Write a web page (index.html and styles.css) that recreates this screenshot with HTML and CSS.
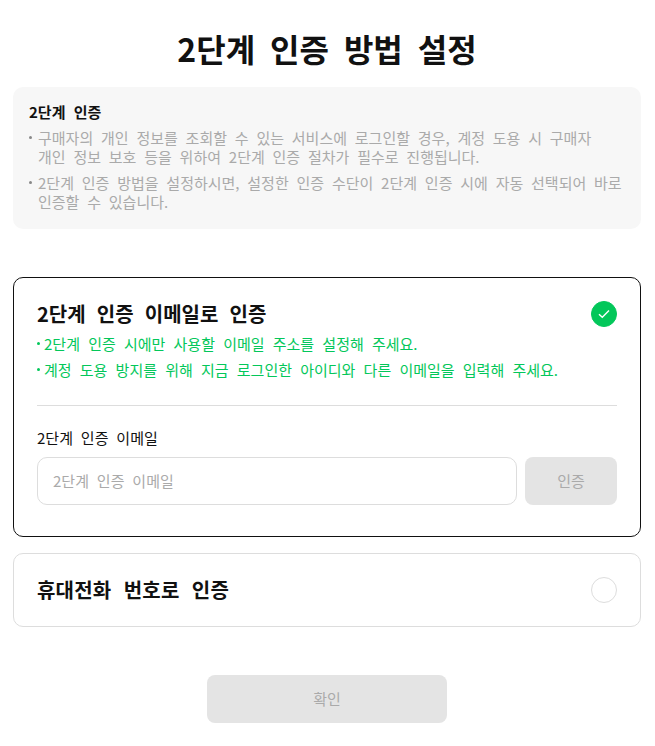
FILE: index.html
```html
<!DOCTYPE html>
<html lang="ko">

<head>
    <meta charset="UTF-8">
    <meta name="viewport" content="width=device-width, initial-scale=1.0">
    <title>2단계 인증 방법 설정</title>
    <link rel="stylesheet" href="styles.css">
</head>

<body>
    <main>
        <h1>2단계 인증 방법 설정</h1>
        <section class="info">
            <h2>2단계 인증</h2>
            <ul class="info-list">
                <li>구매자의 개인 정보를 조회할 수 있는 서비스에 로그인할 경우, 계정 도용 시 구매자<br>개인 정보 보호 등을 위하여 2단계 인증 절차가 필수로 진행됩니다.</li>
                <li>2단계 인증 방법을 설정하시면, 설정한 인증 수단이 2단계 인증 시에 자동 선택되어 바로 인증할 수 있습니다.</li>
            </ul>
        </section>
        <section class="card active">
            <div class="card-head">
                <h3>2단계 인증 이메일로 인증</h3>
                <span class="radio checked">
                    <svg width="12" height="12" viewBox="0 0 12 12" fill="none">
                        <path d="M1 6.2 4.3 9.3 11 2.6" stroke="#fff" stroke-width="1.4"/>
                    </svg>
                </span>
            </div>
            <ul class="notes">
                <li>2단계 인증 시에만 사용할 이메일 주소를 설정해 주세요.</li>
                <li>계정 도용 방지를 위해 지금 로그인한 아이디와 다른 이메일을 입력해 주세요.</li>
            </ul>
            <div class="field">
                <label for="email">2단계 인증 이메일</label>
                <div class="field-row">
                    <input id="email" type="text" placeholder="2단계 인증 이메일">
                    <button class="btn btn-small" type="button">인증</button>
                </div>
            </div>
        </section>
        <section class="card">
            <div class="card-head">
                <h3 class="phone-title">휴대전화 번호로 인증</h3>
                <span class="radio"></span>
            </div>
        </section>
        <div class="actions">
            <button class="btn btn-confirm" type="button">확인</button>
        </div>
    </main>
</body>

</html>
```

FILE: styles.css
```css
* {
    box-sizing: border-box;
    margin: 0;
    padding: 0;
    font-family: "Noto Sans CJK KR", "Noto Sans", sans-serif;
    color: #111;
}

body {
    background: #fff;
}

main {
    width: 655px;
    padding: 0 14px 0 13px;
}

h1 {
    padding-top: 24px;
    height: 87px;
    font-size: 32px;
    line-height: 48px;
    font-weight: 700;
    word-spacing: 6px;
    text-align: center;
}

.info {
    height: 142px;
    padding: 15px 16px 0;
    background: #f7f7f7;
    border-radius: 10px;
}

.info h2 {
    font-size: 15px;
    line-height: 20px;
    font-weight: 700;
    word-spacing: 4px;
}

.info-list {
    list-style: none;
    margin-top: 6px;
}

.info-list li {
    position: relative;
    padding-left: 9px;
    margin-bottom: 7px;
    font-size: 15px;
    line-height: 19px;
    word-spacing: 3.6px;
    color: #aaa;
}

.info-list li::before,
.notes li::before {
    content: "";
    position: absolute;
    left: 0;
    top: 8px;
    width: 3px;
    height: 3px;
    border-radius: 50%;
    background: #888;
}

.card {
    margin-top: 16px;
    padding: 23px 23px 0;
    height: 74px;
    border: 1px solid #ddd;
    border-radius: 10px;
}

.card.active {
    margin-top: 48px;
    height: 260px;
    border-color: #111;
}

.card-head {
    display: flex;
    justify-content: space-between;
    align-items: center;
    height: 26px;
}

.card-head h3 {
    font-size: 20px;
    line-height: 26px;
    font-weight: 700;
    word-spacing: 5.6px;
}

.card-head .phone-title {
    letter-spacing: 0.2px;
    word-spacing: 6.5px;
}

.radio {
    display: flex;
    align-items: center;
    justify-content: center;
    width: 26px;
    height: 26px;
    border: 1px solid #ddd;
    border-radius: 50%;
}

.radio.checked {
    background: #03c75a;
    border-color: #03c75a;
}

.notes {
    list-style: none;
    margin-top: 7px;
    padding-bottom: 19px;
    border-bottom: 1px solid #ddd;
}

.notes li {
    position: relative;
    padding-left: 7px;
    margin-bottom: 6px;
    font-size: 15px;
    line-height: 20px;
    word-spacing: 4px;
    color: #03c75a;
}

.notes li::before {
    background: #03c75a;
    width: 3px;
    height: 3px;
}

.field {
    margin-top: 22px;
}

.field label {
    display: block;
    font-size: 15px;
    line-height: 20px;
    word-spacing: 3.7px;
}

.field-row {
    display: flex;
    gap: 8px;
    margin-top: 9px;
}

.field-row input {
    flex: 1;
    min-width: 0;
    height: 48px;
    padding: 0 15px 2px;
    border: 1px solid #ddd;
    border-radius: 10px;
    font-size: 15px;
    word-spacing: 3.7px;
    outline: none;
}

.field-row input::placeholder {
    color: #aaa;
}

.btn {
    height: 48px;
    padding-bottom: 2px;
    border: 0;
    border-radius: 8px;
    background: #e4e4e4;
    font-size: 15px;
    font-weight: 400;
    color: #aaa;
}

.btn-small {
    width: 92px;
}

.btn-confirm {
    width: 240px;
}

.actions {
    display: flex;
    justify-content: center;
    margin-top: 48px;
}
```
